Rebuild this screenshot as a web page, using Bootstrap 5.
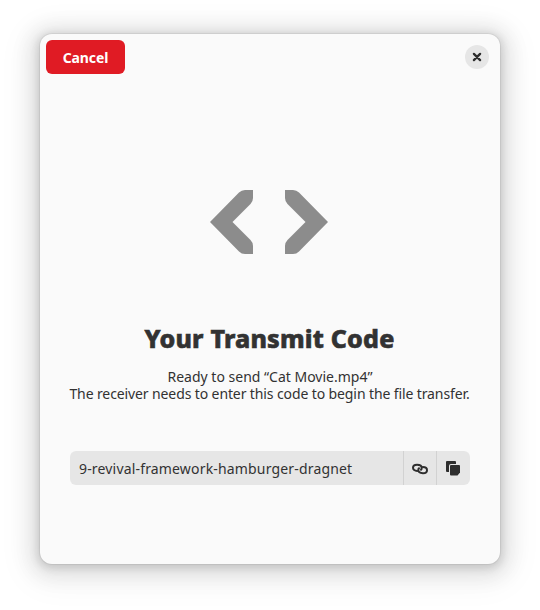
<!DOCTYPE html>
<html lang="en">
<head>
<meta charset="utf-8">
<meta name="viewport" content="width=device-width, initial-scale=1">
<title>Your Transmit Code</title>
<link href="https://cdn.jsdelivr.net/npm/bootstrap@5.3.0/dist/css/bootstrap.min.css" rel="stylesheet">
<style>
body{font-family:"Noto Sans","Open Sans",sans-serif;font-size:14px;line-height:17px;color:#323232;background:#fff}
.page{height:610px;padding:34px 40px 46px}
.window{background:#fafafa;border-radius:12px;box-shadow:0 2px 8px 2px rgba(0,0,0,.13),0 3px 20px 10px rgba(0,0,0,.09),0 6px 32px 16px rgba(0,0,0,.04),0 0 0 1px rgba(0,0,0,.05)}
.titlebar{height:46px;padding:0 11px 0 6px}
.btn-cancel{--bs-btn-bg:#e01b24;--bs-btn-color:#fff;--bs-btn-hover-bg:#e5323a;--bs-btn-hover-color:#fff;width:79px;height:34px;border:0;border-radius:6px;font-size:14px;font-weight:700;line-height:17px;letter-spacing:-.1px}
.btn-x{width:24px;height:24px;background:#e6e6e6;border:0}
.art{padding:110px 2px 0 0}
.heading{font-size:25px;font-weight:800;line-height:32px;margin-top:68px;margin-right:1px;letter-spacing:.18px;-webkit-text-stroke:.6px currentColor}
.desc{margin-top:14px}
.desc-long{letter-spacing:-.11px;margin-right:1px}
.code{width:400px;height:34px;margin-top:49px;background:#e6e6e6;border-radius:6px}
.code-field{padding-left:9px;letter-spacing:.17px}
.code-btn{width:33px;border:0;border-left:1px solid #d2d2d2;border-radius:0;color:#2e2e2e}
.code-btn-last{width:34px;padding-right:1px}
</style>
</head>
<body>
<main class="page">
<section class="window h-100 d-flex flex-column">
<header class="titlebar d-flex justify-content-between align-items-center">
<button class="btn btn-cancel p-0">Cancel</button>
<button class="btn btn-x rounded-circle p-0 d-flex align-items-center justify-content-center" aria-label="Close"><svg width="10" height="10" viewBox="0 0 10 10"><path d="M1.900 1.900l6.200 6.200M8.100 1.900l-6.200 6.200" stroke="#2e2e2e" stroke-width="2.300" stroke-linecap="round"/></svg></button>
</header>
<div class="d-flex flex-column align-items-center text-center">
<div class="art"><svg class="d-block" width="120" height="64" viewBox="0 0 120 64" fill="#8c8c8c"><path d="M44 0V8Q44 11.500 41.500 14L23.500 32L41.500 50Q44 52.500 44 56V64H36Q32.500 64 30 61.500L1 32L30 2.500Q32.500 0 36 0ZM76 0V8Q76 11.500 78.500 14L96.500 32L78.500 50Q76 52.500 76 56V64H84Q87.500 64 90 61.500L119 32L90 2.500Q87.500 0 84 0Z"/></svg></div>
<h1 class="heading mb-0">Your Transmit Code</h1>
<div class="desc text-nowrap"><div>Ready to send “Cat Movie.mp4”</div><div class="desc-long">The receiver needs to enter this code to begin the file transfer.</div></div>
<div class="code d-flex align-items-stretch overflow-hidden">
<div class="code-field flex-grow-1 d-flex align-items-center">9-revival-framework-hamburger-dragnet</div>
<button class="btn code-btn p-0 d-flex align-items-center justify-content-center" aria-label="Copy link"><svg width="16" height="16" viewBox="0 0 16 16" fill="none" stroke="currentColor" stroke-width="2" stroke-linecap="round"><path d="M5.200 10.900C2.700 10.900 1 9.600 1 7.800C1 6.100 2.700 4.800 5 4.800C7.700 4.800 9.700 6.100 9.700 7.900C9.700 8.700 9.400 9.300 9 9.700"/><path d="M10.800 7.100C13.300 7.100 15 8.400 15 10.200C15 11.900 13.300 13.200 11 13.200C8.300 13.200 6.300 11.900 6.300 10.100C6.300 9.300 6.600 8.700 7 8.300"/></svg></button>
<button class="btn code-btn code-btn-last py-0 ps-0 d-flex align-items-center justify-content-center" aria-label="Copy code"><svg width="16" height="16" viewBox="0 0 16 16" fill="currentColor"><path d="M2 1H10Q11 1 11 2V4H6Q4 4 4 6V12H2Q1 12 1 11V2Q1 1 2 1Z"/><path d="M6 5H14Q15 5 15 6V12.500L12.500 15.500H6Q5 15.500 5 14.500V6Q5 5 6 5Z"/></svg></button>
</div>
</div>
</section>
</main>
<script src="https://cdn.jsdelivr.net/npm/bootstrap@5.3.0/dist/js/bootstrap.bundle.min.js"></script>
</body>
</html>
